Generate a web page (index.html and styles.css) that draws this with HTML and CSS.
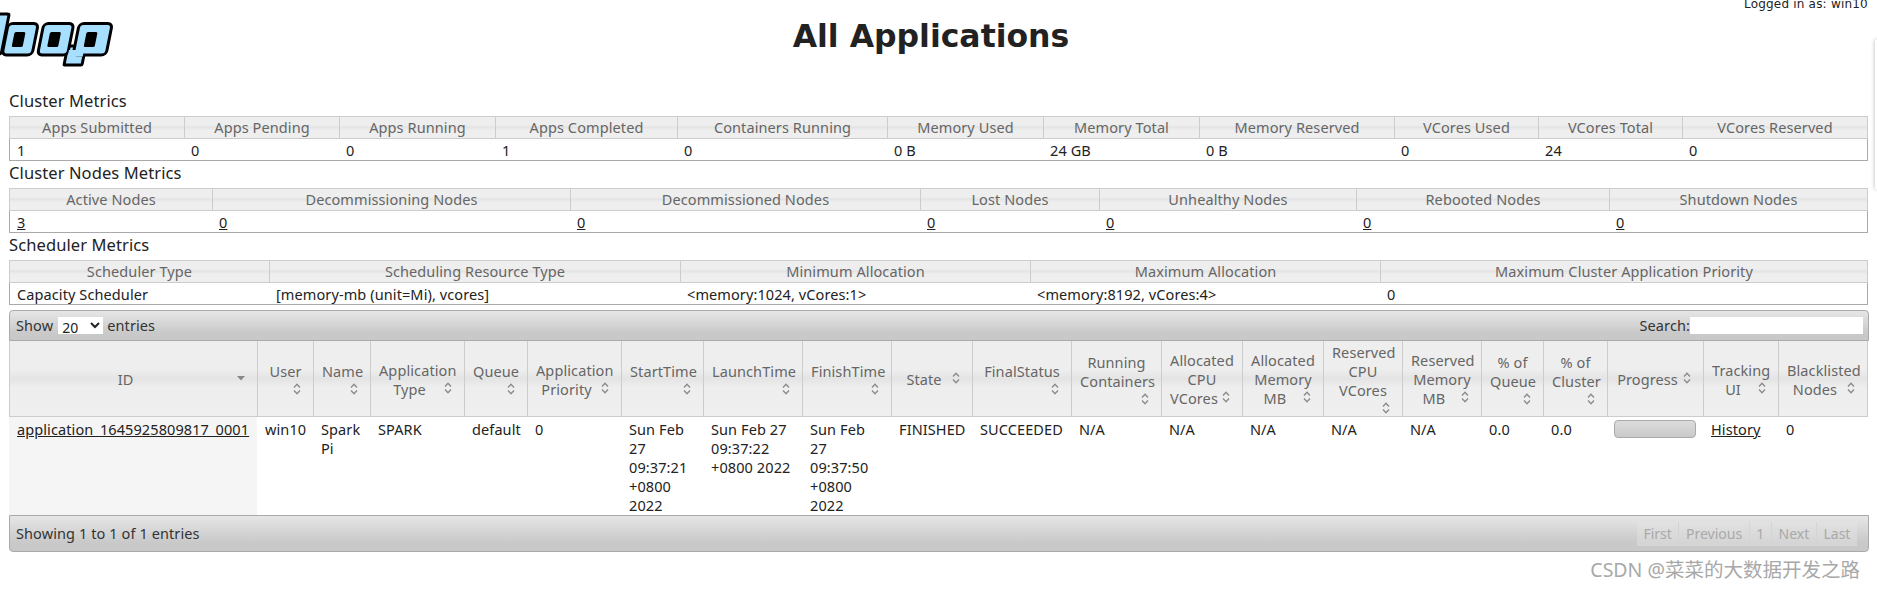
FILE: index.html
```html
<!DOCTYPE html>
<html lang="en">
<head>
<meta charset="utf-8">
<title>All Applications</title>
<link rel="stylesheet" href="styles.css">
</head>
<body>
<svg class="defs" aria-hidden="true">
  <symbol id="both" viewBox="0 0 16 16"><path d="M5 6.500 8 3.200l3 3.300M5 9.500l3 3.300 3-3.300" fill="none" stroke="#8a8a8a" stroke-width="1.3"/></symbol>
  <symbol id="desc" viewBox="0 0 16 16"><path d="M4 6h8l-4 4.500z" fill="#888"/></symbol>
</svg>
<header class="top">
  <svg class="logo" viewBox="0 0 115 67" width="115" height="67" role="img" aria-label="Hadoop logo">
    <g transform="translate(8 0) skewX(-11.3)" fill="#a6dfff" stroke="#000" stroke-width="3">
      <rect x="-16" y="14" width="20" height="40" rx="2"/>
      <rect x="69" y="46" width="18" height="19" rx="1"/>
      <rect x="5" y="23.500" width="30" height="31.500" rx="4.500"/>
      <rect x="40.500" y="23.500" width="30" height="31.500" rx="4.500"/>
      <rect x="76" y="23.500" width="33" height="31.500" rx="4.500"/>
      <rect x="71" y="50" width="15" height="6.500" stroke="none"/>
      <g fill="#000" stroke="none">
        <rect x="13" y="32" width="11" height="15" rx="1.500"/>
        <rect x="48.500" y="32" width="11" height="15" rx="1.500"/>
        <rect x="85" y="32" width="11" height="15" rx="1.500"/>
      </g>
    </g>
  </svg>
  <h1 class="title">All Applications</h1>
  <div class="user">Logged in as: win10</div>
</header>
<main class="content">
  <section class="metric">
    <h3 class="metric-title">Cluster Metrics</h3>
    <table class="mtable cluster">
      <colgroup><col><col><col><col><col><col><col><col><col><col><col></colgroup>
      <thead><tr><th>Apps Submitted</th><th>Apps Pending</th><th>Apps Running</th><th>Apps Completed</th><th>Containers Running</th><th>Memory Used</th><th>Memory Total</th><th>Memory Reserved</th><th>VCores Used</th><th>VCores Total</th><th>VCores Reserved</th></tr></thead>
      <tbody><tr><td>1</td><td>0</td><td>0</td><td>1</td><td>0</td><td>0 B</td><td>24 GB</td><td>0 B</td><td>0</td><td>24</td><td>0</td></tr></tbody>
    </table>
  </section>
  <section class="metric">
    <h3 class="metric-title">Cluster Nodes Metrics</h3>
    <table class="mtable nodes">
      <colgroup><col><col><col><col><col><col><col></colgroup>
      <thead><tr><th>Active Nodes</th><th>Decommissioning Nodes</th><th>Decommissioned Nodes</th><th>Lost Nodes</th><th>Unhealthy Nodes</th><th>Rebooted Nodes</th><th>Shutdown Nodes</th></tr></thead>
      <tbody><tr><td><a href="#">3</a></td><td><a href="#">0</a></td><td><a href="#">0</a></td><td><a href="#">0</a></td><td><a href="#">0</a></td><td><a href="#">0</a></td><td><a href="#">0</a></td></tr></tbody>
    </table>
  </section>
  <section class="metric">
    <h3 class="metric-title">Scheduler Metrics</h3>
    <table class="mtable sched">
      <colgroup><col><col><col><col><col></colgroup>
      <thead><tr><th>Scheduler Type</th><th>Scheduling Resource Type</th><th>Minimum Allocation</th><th>Maximum Allocation</th><th>Maximum Cluster Application Priority</th></tr></thead>
      <tbody><tr><td>Capacity Scheduler</td><td>[memory-mb (unit=Mi), vcores]</td><td>&lt;memory:1024, vCores:1&gt;</td><td>&lt;memory:8192, vCores:4&gt;</td><td>0</td></tr></tbody>
    </table>
  </section>
  <section class="apps">
    <div class="bar bar-top">
      <label class="length">Show <select class="length-select"><option>20</option><option>40</option><option>60</option></select> entries</label>
      <label class="search">Search:<input class="search-input" type="text"></label>
    </div>
    <table class="atable">
      <colgroup><col><col><col><col><col><col><col><col><col><col><col><col><col><col><col><col><col><col><col><col><col></colgroup>
      <thead><tr>
        <th>ID<svg class="sort"><use href="#desc"/></svg></th>
        <th>User<svg class="sort"><use href="#both"/></svg></th>
        <th>Name<svg class="sort"><use href="#both"/></svg></th>
        <th>Application Type<svg class="sort"><use href="#both"/></svg></th>
        <th>Queue<svg class="sort"><use href="#both"/></svg></th>
        <th>Application Priority<svg class="sort"><use href="#both"/></svg></th>
        <th>StartTime<svg class="sort"><use href="#both"/></svg></th>
        <th>LaunchTime<svg class="sort"><use href="#both"/></svg></th>
        <th>FinishTime<svg class="sort"><use href="#both"/></svg></th>
        <th>State<svg class="sort"><use href="#both"/></svg></th>
        <th>FinalStatus<svg class="sort"><use href="#both"/></svg></th>
        <th>Running Containers<svg class="sort"><use href="#both"/></svg></th>
        <th>Allocated CPU VCores<svg class="sort"><use href="#both"/></svg></th>
        <th>Allocated Memory MB<svg class="sort"><use href="#both"/></svg></th>
        <th>Reserved CPU VCores<svg class="sort"><use href="#both"/></svg></th>
        <th>Reserved Memory MB<svg class="sort"><use href="#both"/></svg></th>
        <th>% of Queue<svg class="sort"><use href="#both"/></svg></th>
        <th>% of Cluster<svg class="sort"><use href="#both"/></svg></th>
        <th>Progress<svg class="sort"><use href="#both"/></svg></th>
        <th>Tracking UI<svg class="sort"><use href="#both"/></svg></th>
        <th>Blacklisted Nodes<svg class="sort"><use href="#both"/></svg></th>
      </tr></thead>
      <tbody><tr>
        <td class="sorted"><a href="#">application_1645925809817_0001</a></td>
        <td>win10</td>
        <td>Spark Pi</td>
        <td>SPARK</td>
        <td>default</td>
        <td>0</td>
        <td>Sun Feb 27 09:37:21 +0800 2022</td>
        <td>Sun Feb 27 09:37:22 +0800 2022</td>
        <td>Sun Feb 27 09:37:50 +0800 2022</td>
        <td>FINISHED</td>
        <td>SUCCEEDED</td>
        <td>N/A</td>
        <td>N/A</td>
        <td>N/A</td>
        <td>N/A</td>
        <td>N/A</td>
        <td>0.0</td>
        <td>0.0</td>
        <td><div class="progress"></div></td>
        <td><a href="#">History</a></td>
        <td>0</td>
      </tr></tbody>
    </table>
    <div class="bar bar-bottom">
      <div class="info">Showing 1 to 1 of 1 entries</div>
      <div class="pager"><span class="pg">First</span><span class="pg">Previous</span><span class="pg">1</span><span class="pg">Next</span><span class="pg">Last</span></div>
    </div>
  </section>
</main>
<div class="edge"></div>
<div class="watermark">CSDN @菜菜的大数据开发之路</div>
</body>
</html>
```

FILE: styles.css
```css
html, body {
  margin: 0;
  height: 589px;
  overflow: hidden;
  background: #fff;
}
body {
  position: relative;
  font-family: "Noto Sans", sans-serif;
  font-size: 14.5px;
  letter-spacing: .1px;
  line-height: 19px;
  color: #222;
}
.defs { display: none; }
a { color: #222; text-decoration: underline; }

.top {
  display: grid;
  grid-template-columns: 115px 1fr 133px;
  height: 89px;
  box-sizing: border-box;
}
.logo { display: block; }
.title {
  margin: 15px -3px 0 0;
  padding-top: 1px;
  text-align: center;
  font-family: "DejaVu Sans", sans-serif;
  font-weight: bold;
  font-size: 31.5px;
  letter-spacing: 0;
  line-height: 40px;
  color: #222;
}
.user {
  margin-top: -3px;
  font-family: "DejaVu Sans", sans-serif;
  font-size: 12px;
  letter-spacing: .2px;
  line-height: 14px;
  white-space: nowrap;
}

.content { padding: 0 8px 0 9px; }

.metric-title {
  margin: 0;
  height: 27px;
  font-weight: normal;
  font-size: 16.500px;
  line-height: 24px;
  color: #222;
}
table {
  border-collapse: separate;
  border-spacing: 0;
  table-layout: fixed;
  width: 1859px;
}
th {
  font-weight: normal;
  color: #666;
  background: linear-gradient(#eee 0 38%, #e4e4e4 50%, #eee 62%, #efefef);
  border-left: 1px solid #ccc;
  text-align: center;
  box-sizing: border-box;
}
th:last-child { border-right: 1px solid #ccc; }
td { vertical-align: top; text-align: left; }

.mtable th {
  height: 23px;
  padding: 0;
  border-top: 1px solid #ccc;
  border-bottom: 1px solid #ccc;
  line-height: 21px;
}
.mtable td {
  box-sizing: border-box;
  height: 22px;
  padding: 1px 7px 0;
  line-height: 20px;
  border-bottom: 1px solid #aaa;
}
.mtable td:first-child { border-left: 1px solid #aaa; }
.mtable td:last-child { border-right: 1px solid #aaa; }

.cluster col:nth-child(1) { width: 175px; }
.cluster col:nth-child(2) { width: 155px; }
.cluster col:nth-child(3) { width: 156px; }
.cluster col:nth-child(4) { width: 182px; }
.cluster col:nth-child(5) { width: 210px; }
.cluster col:nth-child(6) { width: 156px; }
.cluster col:nth-child(7) { width: 156px; }
.cluster col:nth-child(8) { width: 195px; }
.cluster col:nth-child(9) { width: 144px; }
.cluster col:nth-child(10) { width: 144px; }
.cluster col:nth-child(11) { width: 186px; }

.nodes col:nth-child(1) { width: 203px; }
.nodes col:nth-child(2) { width: 358px; }
.nodes col:nth-child(3) { width: 350px; }
.nodes col:nth-child(4) { width: 179px; }
.nodes col:nth-child(5) { width: 257px; }
.nodes col:nth-child(6) { width: 253px; }
.nodes col:nth-child(7) { width: 259px; }

.sched col:nth-child(1) { width: 260px; }
.sched col:nth-child(2) { width: 411px; }
.sched col:nth-child(3) { width: 350px; }
.sched col:nth-child(4) { width: 350px; }
.sched col:nth-child(5) { width: 488px; }

.apps { margin-top: 5px; }
.bar {
  display: flex;
  justify-content: space-between;
  align-items: center;
  box-sizing: border-box;
  width: 1860px;
  border: 1px solid #aaa;
  background: linear-gradient(#e6e6e6, #c9c9c9 75%, #c8c8c8);
  padding: 0 5px 0 6px;
  color: #333;
}
.bar-top {
  height: 31px;
  border-radius: 4px 4px 0 0;
}
.bar-bottom {
  height: 37px;
  border-radius: 0 0 4px 4px;
  padding-right: 11px;
}
.length, .search { display: flex; align-items: center; }
.length-select {
  box-sizing: border-box;
  width: 45px;
  height: 17px;
  margin: 0 4px 0 5px;
  padding: 0;
  border: 0;
  background-color: #fff;
  font-family: "Noto Sans", sans-serif;
  font-size: 14px;
  color: #222;
}
.search-input {
  box-sizing: border-box;
  width: 173px;
  height: 17px;
  padding: 0;
  border: 0;
  background: #fff;
}

.atable col:nth-child(1) { width: 248px; }
.atable col:nth-child(2) { width: 56px; }
.atable col:nth-child(3) { width: 57px; }
.atable col:nth-child(4) { width: 94px; }
.atable col:nth-child(5) { width: 63px; }
.atable col:nth-child(6) { width: 94px; }
.atable col:nth-child(7) { width: 82px; }
.atable col:nth-child(8) { width: 99px; }
.atable col:nth-child(9) { width: 89px; }
.atable col:nth-child(10) { width: 81px; }
.atable col:nth-child(11) { width: 99px; }
.atable col:nth-child(12) { width: 90px; }
.atable col:nth-child(13) { width: 81px; }
.atable col:nth-child(14) { width: 81px; }
.atable col:nth-child(15) { width: 79px; }
.atable col:nth-child(16) { width: 79px; }
.atable col:nth-child(17) { width: 62px; }
.atable col:nth-child(18) { width: 64px; }
.atable col:nth-child(19) { width: 96px; }
.atable col:nth-child(20) { width: 75px; }
.atable col:nth-child(21) { width: 90px; }

.atable th {
  height: 76px;
  padding: 2px 8px 0;
  border-bottom: 1px solid #ccc;
  vertical-align: middle;
}
.sort {
  float: right;
  width: 16px;
  height: 16px;
}
.atable td {
  box-sizing: border-box;
  height: 98px;
  padding: 3px 8px 0;
}
.atable td.sorted { background: #f5f5f5; white-space: nowrap; }
.progress {
  box-sizing: border-box;
  width: 82px;
  height: 18px;
  margin-left: -1px;
  border: 1px solid #aaa;
  border-radius: 4px;
  background: linear-gradient(#dcdcdc, #c9c9c9);
}

.pager { display: flex; height: 24px; }
.pg {
  padding: 0 6.600px;
  line-height: 24px;
  color: #a9a9a9;
  letter-spacing: 0;
  font-size: 14px;
  background: rgba(228, 228, 228, .45);
  border-right: 1px solid #d4d4d4;
}
.pg:last-child { border-right: 0; }

.edge {
  position: absolute;
  left: 1875px;
  top: 40px;
  width: 4px;
  height: 149px;
  background: #fff;
  box-shadow: 0 0 4px rgba(0, 0, 0, .3);
}
.watermark {
  position: absolute;
  right: 17px;
  top: 558px;
  font-family: "Noto Sans", "Noto Sans CJK SC", sans-serif;
  font-size: 19.500px;
  letter-spacing: 0;
  line-height: 24px;
  color: #a8a8a8;
  white-space: nowrap;
}
```
